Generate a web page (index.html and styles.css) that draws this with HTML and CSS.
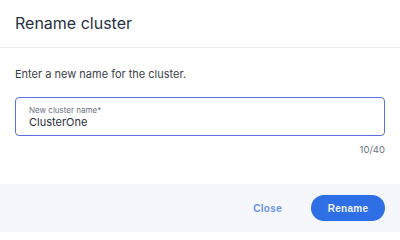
FILE: index.html
```html
<!DOCTYPE html>
<html>
<head>
<meta charset="utf-8">
<link rel="stylesheet" href="styles.css">
</head>
<body>
<div class="dialog">
  <div class="header">
    <h2 class="title">Rename cluster</h2>
  </div>
  <div class="content">
    <p class="desc">Enter a new name for the cluster.</p>
    <div class="field">
      <label class="label">New cluster name*</label>
      <div class="value">ClusterOne</div>
    </div>
    <div class="counter">10/40</div>
  </div>
  <div class="footer">
    <button class="btn btn-text">Close</button>
    <button class="btn btn-primary">Rename</button>
  </div>
</div>
</body>
</html>
```
FILE: styles.css
```css
html, body {
  margin: 0;
  padding: 0;
  background: #ffffff;
}
body {
  font-family: Inter, "Noto Sans", sans-serif;
  width: 400px;
  height: 232px;
  overflow: hidden;
}
.dialog {
  width: 400px;
  height: 232px;
  display: flex;
  flex-direction: column;
  background: #fff;
}
.header {
  height: 47px;
  border-bottom: 1px solid #ececef;
  padding: 0 15px;
  display: flex;
  align-items: center;
}
.title {
  margin: 0;
  font-size: 16px;
  font-weight: 400;
  color: #273142;
  padding-bottom: 2px;
}
.content {
  padding: 0 15px;
  flex: 1;
}
.desc {
  margin: 19px 0 0;
  font-size: 11px;
  color: #3a3f47;
  line-height: 14px;
}
.field {
  margin-top: 16px;
  height: 36px;
  border: 1.5px solid #5c70e6;
  border-radius: 4px;
  padding: 6.5px 13px 0;
  box-sizing: border-box;
  height: 39px;
  display: flex;
  flex-direction: column;
  justify-content: flex-start;
}
.label {
  font-size: 8px;
  color: #6b7280;
  line-height: 10px;
}
.value {
  font-size: 11px;
  color: #2a2f38;
  line-height: 15px;
}
.counter {
  text-align: right;
  font-size: 9.5px;
  color: #6b7280;
  margin-top: 8px;
}
.footer {
  height: 48px;
  background: #f6f7fd;
  display: flex;
  align-items: center;
  justify-content: flex-end;
  padding: 0 15px;
  gap: 29px;
}
.btn {
  border: none;
  font-family: "Liberation Sans", Arial, sans-serif;
  font-size: 10px;
  font-weight: 700;
  letter-spacing: 0.3px;
  cursor: pointer;
}
.btn-text {
  background: transparent;
  color: #6a93ec;
  padding: 0;
}
.btn-primary {
  background: #2f6fe6;
  color: #eef3ff;
  width: 74px;
  height: 26px;
  border-radius: 13px;
}
```
